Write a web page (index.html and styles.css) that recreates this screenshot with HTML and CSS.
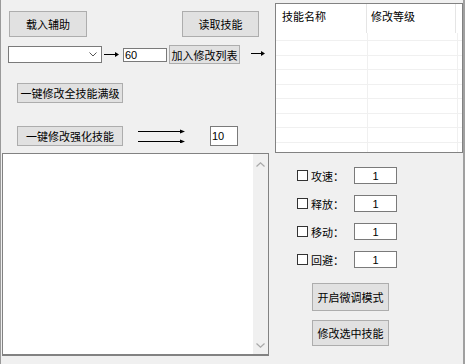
FILE: index.html
```html
<!DOCTYPE html>
<html lang="zh-CN">
<head>
    <meta charset="UTF-8">
    <meta name="viewport" content="width=device-width, initial-scale=1.0">
    <title>技能修改</title>
    <link rel="stylesheet" href="styles.css">
</head>
<body>
    <div class="window">
        <div class="top">
            <div class="controls">
                <div class="row row-load">
                    <button class="btn btn-load">载入辅助</button>
                    <button class="btn btn-read">读取技能</button>
                </div>
                <div class="row row-add">
                    <div class="combo">
                        <svg width="8" height="5" viewBox="0 0 8 5"><path d="M0.5 0.5 L4 4 L7.5 0.5" fill="none" stroke="#555" stroke-width="1"/></svg>
                    </div>
                    <svg class="arrow-short" width="16" height="9" viewBox="0 0 16 9"><path d="M0 4.5 H12" stroke="#000" stroke-width="1"/><path d="M11 2 L15 4.5 L11 7 Z" fill="#000"/></svg>
                    <input type="text" class="field field-level" value="60">
                    <button class="btn btn-add">加入修改列表</button>
                    <svg class="arrow-list" width="15" height="9" viewBox="0 0 15 9"><path d="M0 4.5 H11" stroke="#000" stroke-width="1"/><path d="M10 2 L14 4.5 L10 7 Z" fill="#000"/></svg>
                </div>
                <div class="row row-max">
                    <button class="btn btn-wide">一键修改全技能满级</button>
                </div>
                <div class="row row-boost">
                    <button class="btn btn-wide">一键修改强化技能</button>
                    <svg class="arrow-double" width="47" height="14" viewBox="0 0 47 14"><path d="M0 2.5 H43 M0 12.5 H43" stroke="#000" stroke-width="1"/><path d="M42 0.5 L47 2.5 L42 4.5 Z M42 10.5 L47 12.5 L42 14.5 Z" fill="#000"/></svg>
                    <input type="text" class="field field-boost" value="10">
                </div>
            </div>
            <div class="skill-list">
                <div class="list-head">
                    <div class="cell cell-name">技能名称</div>
                    <div class="cell cell-level">修改等级</div>
                    <div class="cell cell-rest"></div>
                </div>
                <div class="list-row list-gap">
                    <div class="cell cell-name"></div><div class="cell cell-level"></div><div class="cell cell-rest"></div>
                </div>
                <div class="list-row">
                    <div class="cell cell-name"></div><div class="cell cell-level"></div><div class="cell cell-rest"></div>
                </div>
                <div class="list-row">
                    <div class="cell cell-name"></div><div class="cell cell-level"></div><div class="cell cell-rest"></div>
                </div>
                <div class="list-row">
                    <div class="cell cell-name"></div><div class="cell cell-level"></div><div class="cell cell-rest"></div>
                </div>
                <div class="list-row">
                    <div class="cell cell-name"></div><div class="cell cell-level"></div><div class="cell cell-rest"></div>
                </div>
                <div class="list-row">
                    <div class="cell cell-name"></div><div class="cell cell-level"></div><div class="cell cell-rest"></div>
                </div>
                <div class="list-row">
                    <div class="cell cell-name"></div><div class="cell cell-level"></div><div class="cell cell-rest"></div>
                </div>
                <div class="list-row">
                    <div class="cell cell-name"></div><div class="cell cell-level"></div><div class="cell cell-rest"></div>
                </div>
                <div class="list-row list-last">
                    <div class="cell cell-name"></div><div class="cell cell-level"></div><div class="cell cell-rest"></div>
                </div>
            </div>
        </div>
        <div class="bottom">
            <div class="memo">
                <div class="memo-text"></div>
                <div class="vscroll">
                    <svg width="9" height="5" viewBox="0 0 9 5"><path d="M0.5 4.5 L4.5 0.8 L8.5 4.5" fill="none" stroke="#a8a8a8" stroke-width="1.2"/></svg>
                    <svg width="9" height="5" viewBox="0 0 9 5"><path d="M0.5 0.5 L4.5 4.2 L8.5 0.5" fill="none" stroke="#a8a8a8" stroke-width="1.2"/></svg>
                </div>
            </div>
            <div class="tweak">
                <div class="tweak-row">
                    <input type="checkbox" class="check" id="speed">
                    <label for="speed" class="tweak-label">攻速：</label>
                    <input type="text" class="field field-tweak" value="1">
                </div>
                <div class="tweak-row">
                    <input type="checkbox" class="check" id="release">
                    <label for="release" class="tweak-label">释放：</label>
                    <input type="text" class="field field-tweak" value="1">
                </div>
                <div class="tweak-row">
                    <input type="checkbox" class="check" id="move">
                    <label for="move" class="tweak-label">移动：</label>
                    <input type="text" class="field field-tweak" value="1">
                </div>
                <div class="tweak-row">
                    <input type="checkbox" class="check" id="dodge">
                    <label for="dodge" class="tweak-label">回避：</label>
                    <input type="text" class="field field-tweak" value="1">
                </div>
                <button class="btn btn-tune">开启微调模式</button>
                <button class="btn btn-apply">修改选中技能</button>
            </div>
        </div>
    </div>
</body>
</html>
```

FILE: styles.css
```css
body {
    margin: 0;
    background-color: #f0f0f0;
    font-family: "Liberation Sans", "Noto Sans CJK SC", sans-serif;
    font-size: 11px;
    color: #000;
}
.window {
    width: 465px;
    height: 364px;
    box-sizing: border-box;
    border-left: 1px solid #9a9a9a;
    border-right: 2px solid #a0a0a0;
    display: flex;
    flex-direction: column;
}
.top {
    display: flex;
    height: 153px;
    flex: none;
}
.controls {
    width: 274px;
}
.row {
    display: flex;
    align-items: center;
}
.row-load {
    padding-top: 11px;
}
.row-add {
    margin-top: 8px;
    height: 19px;
}
.row-max {
    margin-top: 19px;
}
.row-boost {
    margin-top: 23px;
}
.btn {
    font: inherit;
    color: #000;
    background-color: #e1e1e1;
    border: 1px solid #adadad;
    box-sizing: border-box;
    padding: 0;
    margin: 0;
    white-space: nowrap;
}
.btn-load {
    margin-left: 8px;
    width: 78px;
    height: 26px;
}
.btn-read {
    margin-left: 95px;
    width: 77px;
    height: 26px;
}
.btn-add {
    margin-left: 2px;
    width: 71px;
    height: 19px;
}
.btn-wide {
    margin-left: 16px;
    width: 106px;
    height: 20px;
}
.combo {
    margin-left: 7px;
    width: 94px;
    height: 17px;
    box-sizing: border-box;
    background-color: #fff;
    border: 1px solid #7a7a7a;
    display: flex;
    align-items: center;
    justify-content: flex-end;
    padding-right: 4px;
}
.arrow-short {
    margin-left: 2px;
}
.arrow-list {
    margin-left: 11px;
    margin-top: -2px;
}
.arrow-double {
    margin-left: 15px;
}
.field {
    font: inherit;
    color: #000;
    background-color: #fff;
    border: 1px solid #7a7a7a;
    box-sizing: border-box;
    margin: 0;
    padding: 0 1px;
}
.field-level {
    margin-left: 3px;
    width: 44px;
    height: 14px;
}
.field-boost {
    margin-left: 25px;
    width: 28px;
    height: 20px;
}
.skill-list {
    margin-top: 3px;
    width: 188px;
    height: 150px;
    box-sizing: border-box;
    border: 1px solid #828282;
    background-color: #fff;
    overflow: hidden;
}
.list-head, .list-row {
    display: flex;
}
.list-head {
    height: 29px;
}
.list-head .cell {
    border-right: 1px solid #e5e5e5;
    padding: 5px 0 0 6px;
    font-family: "Noto Sans CJK SC", sans-serif;
    line-height: 14px;
}
.cell {
    box-sizing: border-box;
}
.cell-name {
    width: 92px;
}
.cell-level {
    width: 90px;
    padding-left: 4px !important;
}
.cell-rest {
    flex: 1;
    border-right: none !important;
}
.list-row {
    height: 14.5px;
    box-sizing: border-box;
    border-bottom: 1px solid #f0f0f0;
}
.list-row .cell {
    border-right: 1px solid #f0f0f0;
}
.list-gap {
    height: 8px;
}
.list-last {
    height: 12px;
    border-bottom: none;
}
.bottom {
    flex: 1;
    display: flex;
}
.memo {
    margin-left: 1px;
    width: 267px;
    height: 203px;
    box-sizing: border-box;
    border: 1px solid #828282;
    border-bottom-width: 2px;
    background-color: #fff;
    display: flex;
}
.memo-text {
    flex: 1;
}
.vscroll {
    width: 15px;
    background-color: #f0f0f0;
    display: flex;
    flex-direction: column;
    justify-content: space-between;
    align-items: center;
    padding: 8px 0 6px;
}
.tweak {
    flex: 1;
    padding-top: 14px;
    display: flex;
    flex-direction: column;
    align-items: flex-start;
}
.tweak-row {
    display: flex;
    align-items: center;
    height: 17px;
    margin-left: 28px;
    margin-bottom: 11px;
}
.check {
    -webkit-appearance: none;
    appearance: none;
    margin: 0;
    width: 11px;
    height: 11px;
    box-sizing: border-box;
    border: 1px solid #333;
    background-color: #fff;
}
.tweak-label {
    margin-left: 3px;
    width: 43px;
    font-family: "Noto Sans CJK SC", sans-serif;
}
.field-tweak {
    width: 43px;
    height: 17px;
    text-align: center;
}
.btn-tune {
    margin-left: 43px;
    margin-top: 4px;
    width: 77px;
    height: 28px;
}
.btn-apply {
    margin-left: 43px;
    margin-top: 9px;
    width: 77px;
    height: 26px;
}
```
